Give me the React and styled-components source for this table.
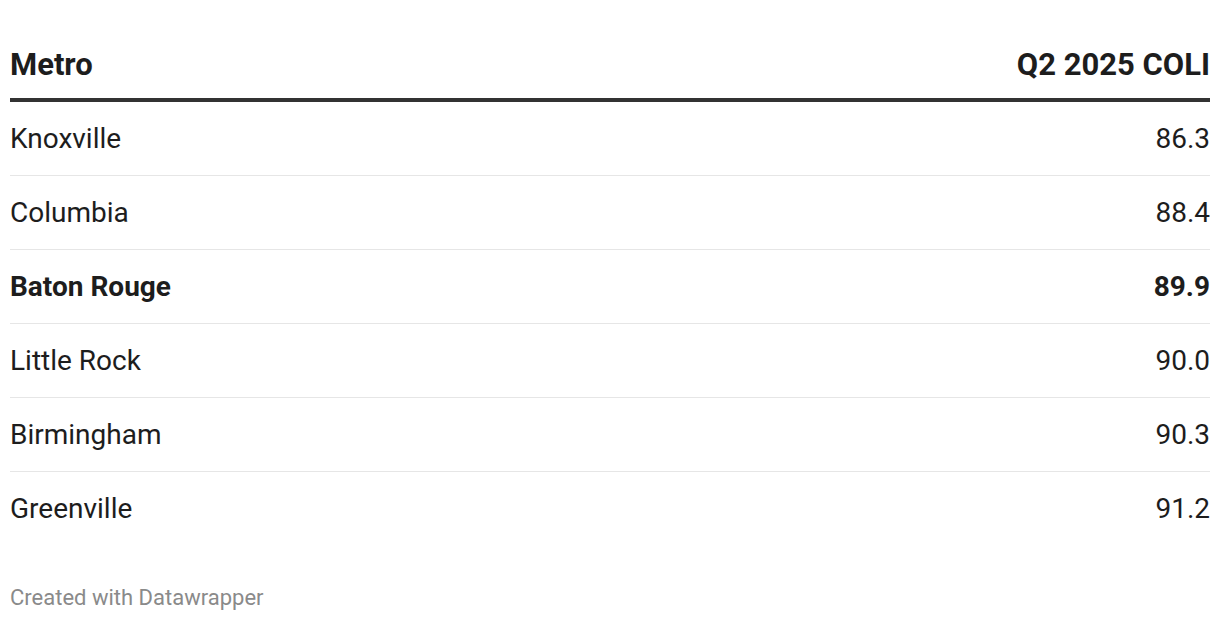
import styled, { createGlobalStyle } from 'styled-components';

const GlobalStyle = createGlobalStyle`
body {
	margin: 0;
	background: #fff;
	font-family: Roboto, "Liberation Sans", sans-serif;
	color: #1d1d1d;
}
`;

const Page = styled.div`
padding: 0 10px;
width: 1200px;
`;

const Table = styled.div`
display: flex;
flex-direction: column;
`;

const HeadRow = styled.div`
display: flex;
justify-content: space-between;
align-items: center;
height: 52px;
padding-top: 38px;
padding-bottom: 8px;
border-bottom: 4px solid #333;
font-size: 31px;
font-weight: 700;
`;

const Row = styled.div`
display: flex;
justify-content: space-between;
align-items: center;
height: 73px;
border-bottom: ${props => props.last ? 'none' : '1px solid #e6e6e6'};
font-size: 28px;
font-weight: ${props => props.bold ? 700 : 400};
`;

const Footer = styled.div`
margin-top: 40px;
font-size: 22px;
color: #8a8a8a;
`;

const rows = [
	['Knoxville', '86.3'],
	['Columbia', '88.4'],
	['Baton Rouge', '89.9', true],
	['Little Rock', '90.0'],
	['Birmingham', '90.3'],
	['Greenville', '91.2'],
];

const App = () => {
	return (
		<Page>
			<GlobalStyle />
			<Table>
				<HeadRow>
					<span>Metro</span>
					<span>Q2 2025 COLI</span>
				</HeadRow>
				{rows.map(([name, val, bold], i) => (
					<Row key={name} bold={bold} last={i === rows.length - 1}>
						<span>{name}</span>
						<span>{val}</span>
					</Row>
				))}
			</Table>
			<Footer>Created with Datawrapper</Footer>
		</Page>
	)
}

export default App
